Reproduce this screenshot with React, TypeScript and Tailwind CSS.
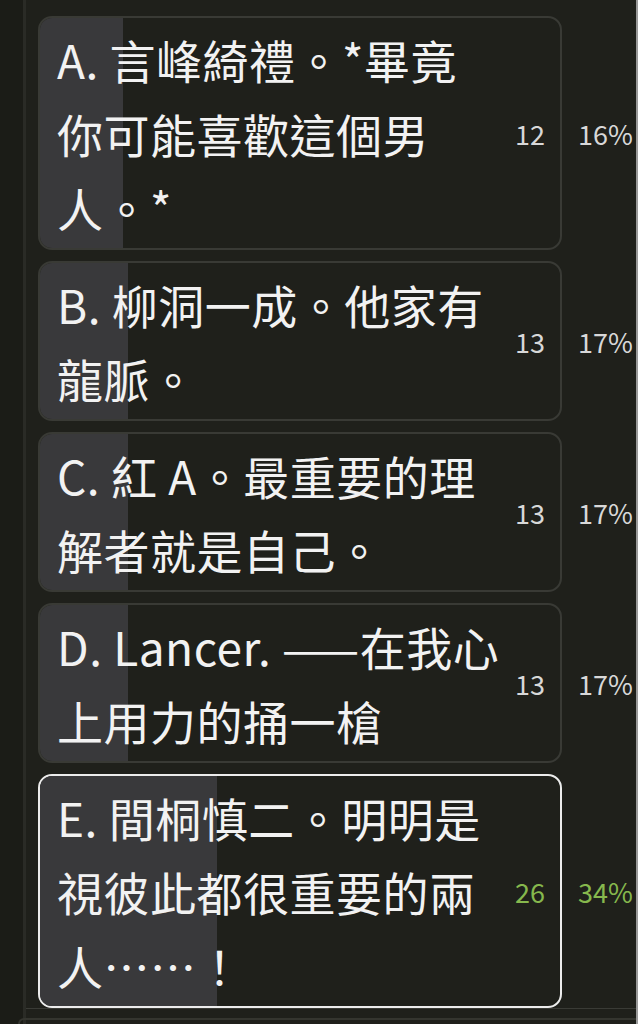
import React from "react";

type Opt = { lines: string[]; count: number; pct: number; win?: boolean; bar: string };

const opts: Opt[] = [
  { lines: ["A. 言峰綺禮。*畢竟", "你可能喜歡這個男", "人。*"], count: 12, pct: 16, bar: "w-[16%]" },
  { lines: ["B. 柳洞一成。他家有", "龍脈。"], count: 13, pct: 17, bar: "w-[17%]" },
  { lines: ["C. 紅 A。最重要的理", "解者就是自己。"], count: 13, pct: 17, bar: "w-[17%]" },
  { lines: ["D. Lancer. ——在我心", "上用力的捅一槍"], count: 13, pct: 17, bar: "w-[17%]" },
  { lines: ["E. 間桐慎二。明明是", "視彼此都很重要的兩", "人……！"], count: 26, pct: 34, win: true, bar: "w-[34%]" },
];

export default function App() {
  return (
    <div
      className="w-[638px] h-[1024px] overflow-hidden bg-[#1f201b] flex"
      style={{ fontFamily: '"Noto Sans CJK TC", "Noto Sans", sans-serif' }}
    >
      <div className="w-[23px] shrink-0 bg-[#1b1c17]" />
      <div className="w-[3px] shrink-0 bg-[#2a2b26]" />
      <div className="flex-1 flex flex-col pt-[16px]">
        <div className="flex flex-col gap-[11px]">
          {opts.map((o, i) => (
            <div key={i} className="flex items-center">
              <div
                className={
                  "relative ml-[12px] w-[524px] shrink-0 rounded-[14px] overflow-hidden border-2 " +
                  (o.win ? "border-[#ececec]" : "border-[#393a35]")
                }
              >
                <div className={"absolute left-0 top-0 bottom-0 bg-[#39393b] " + o.bar} />
                <div className="relative flex items-center py-[4px] pl-[17px] pr-[15px]">
                  <div className="flex-1 text-[46px] leading-[74px] font-normal text-[#f2f2f2] tracking-[0.5px]">
                    {o.lines.map((l, j) => (
                      <div key={j} className="whitespace-nowrap">{l}</div>
                    ))}
                  </div>
                  <div
                    className={
                      "text-[27px] leading-none " + (o.win ? "text-[#86b84d]" : "text-[#d8d8d8]")
                    }
                  >
                    {o.count}
                  </div>
                </div>
              </div>
              <div
                className={
                  "ml-[16px] text-[27px] leading-none " + (o.win ? "text-[#86b84d]" : "text-[#d8d8d8]")
                }
              >
                {o.pct}%
              </div>
            </div>
          ))}
        </div>
        <div className="h-px bg-[#3a3b36]" />
        <div className="mt-[10px] ml-[-8px] h-[40px] rounded-tl-[16px] border-t-2 border-l-2 border-[#34352f]" />
      </div>
      <div className="w-[2px] shrink-0 bg-[#9a9a9a]" />
    </div>
  );
}
